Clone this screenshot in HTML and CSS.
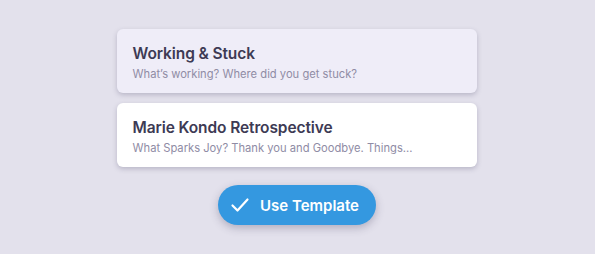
FILE: index.html
```html
<!DOCTYPE html>
<html lang="en">
<head>
    <meta charset="UTF-8">
    <title>Templates</title>
    <link rel="stylesheet" href="styles.css">
</head>
<body>
    <div id="painel">
        <div class="modelo selecionado">
            <h2 class="modelo-titulo">Working &amp; Stuck</h2>
            <p class="modelo-descricao">What’s working? Where did you get stuck?</p>
        </div>
        <div class="modelo">
            <h2 class="modelo-titulo">Marie Kondo Retrospective</h2>
            <p class="modelo-descricao">What Sparks Joy? Thank you and Goodbye. Things...</p>
        </div>
        <button id="usar">
            <svg width="20" height="20" viewBox="0 0 20 20"><path d="M2.5 10.5 L7.5 15.5 L17.5 4.5" fill="none" stroke="#fff" stroke-width="2.2" stroke-linecap="round" stroke-linejoin="round"/></svg>
            Use Template
        </button>
    </div>
</body>
</html>
```

FILE: styles.css
```css
* {
    font-family: "Inter", "Noto Sans", sans-serif;
    box-sizing: border-box;
}

body {
    margin: 0;
    background-color: #e3e1ec;
    height: 254px;
}

#painel {
    display: flex;
    flex-direction: column;
    align-items: center;
    padding: 29px 2px 0 0;
    gap: 10px;
}

.modelo {
    width: 360px;
    height: 64px;
    background-color: #fff;
    border-radius: 6px;
    padding: 15px 16px 0;
    box-shadow: 0 2px 5px rgba(60, 55, 90, .25);
}

.modelo.selecionado {
    background-color: #efedf8;
}

.modelo-titulo {
    margin: 0;
    font-size: 15.5px;
    font-weight: 600;
    color: #3d3a54;
    line-height: 20px;
    letter-spacing: -0.1px;
}

.modelo-descricao {
    margin: 2px 0 0;
    font-size: 11.2px;
    color: #8f8ca5;
    line-height: 16px;
}

#usar {
    margin-top: 8px;
    width: 158px;
    height: 40px;
    border: none;
    border-radius: 20px;
    background-color: #3498e0;
    color: #fff;
    font-size: 15px;
    font-weight: 600;
    display: flex;
    align-items: center;
    justify-content: center;
    gap: 10px;
    padding: 0 14px 0 10px;
    box-shadow: 0 3px 8px rgba(60, 55, 90, .3);
}
```
